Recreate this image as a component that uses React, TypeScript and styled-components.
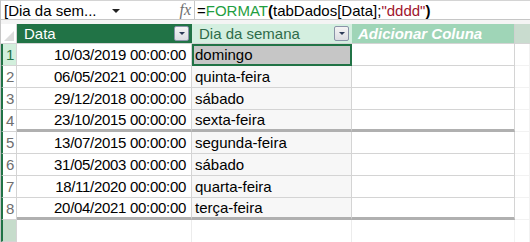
import React from "react";
import styled, { createGlobalStyle } from "styled-components";

const Global = createGlobalStyle`
  html, body {
    margin: 0;
    padding: 0;
    background: #ffffff;
  }
  body {
    font-family: "Liberation Sans", Arial, sans-serif;
  }
`;

const Root = styled.div`
  width: 530px;
  height: 242px;
  overflow: hidden;
  background: #ffffff;
  display: flex;
  flex-direction: column;
  border-left: 1px solid #c6c6c6;
  box-sizing: border-box;
`;

const FormulaBar = styled.div`
  display: flex;
  height: 22px;
  border-top: 1px solid #d4d4d4;
  border-bottom: 1px solid #c6c6c6;
  box-sizing: border-box;
  font-size: 15px;
  color: #000;
`;

const NameBox = styled.div`
  width: 194px;
  display: flex;
  align-items: center;
  padding-left: 3px;
  box-sizing: border-box;
  border-right: 1px solid #c6c6c6;
  white-space: nowrap;
`;

const NameText = styled.span`
  width: 108px;
`;

const DownArrow = styled.span`
  width: 0;
  height: 0;
  border-left: 4px solid transparent;
  border-right: 4px solid transparent;
  border-top: 4px solid #222;
  margin-top: 2px;
`;

const Fx = styled.span`
  margin-left: auto;
  margin-right: 3px;
  font-family: "Liberation Serif", "Times New Roman", serif;
  font-style: italic;
  font-size: 16px;
  color: #6f6f6f;
`;

const Formula = styled.div`
  display: flex;
  align-items: center;
  padding-left: 2px;
  white-space: nowrap;
`;

const Fn = styled.span`
  color: #1f9e3f;
`;

const Paren = styled.span`
  font-weight: bold;
`;

const Str = styled.span`
  color: #a0142e;
`;

const Gap = styled.div`
  height: 5px;
  background: #f4f4f4;
`;

const Grid = styled.div`
  display: grid;
  grid-template-columns: 16px 175px 160px 163px 1fr;
  grid-template-rows: 20px repeat(9, 22px);
  font-size: 15px;
`;

const Corner = styled.div`
  position: relative;
  background: #ffffff;
  border-right: 1px solid #d4d4d4;
  border-bottom: 1px solid #d4d4d4;
  &::after {
    content: "";
    position: absolute;
    right: 2px;
    bottom: 2px;
    width: 0;
    height: 0;
    border-left: 10px solid transparent;
    border-bottom: 10px solid #dcdcdc;
  }
`;

const Header = styled.div<{ $tone: "dark" | "light" | "add" | "rest" }>`
  display: flex;
  align-items: center;
  padding-left: ${(p) => (p.$tone === "add" ? "6px" : "7px")};
  padding-right: 3px;
  box-sizing: border-box;
  white-space: nowrap;
  background: ${(p) =>
    p.$tone === "dark"
      ? "#217346"
      : p.$tone === "light"
      ? "#d4efe0"
      : p.$tone === "add"
      ? "#9fd5b7"
      : "#c9dccf"};
  color: ${(p) => (p.$tone === "dark" || p.$tone === "add" ? "#ffffff" : "#2f6b4a")};
  font-style: ${(p) => (p.$tone === "add" ? "italic" : "normal")};
  font-weight: ${(p) => (p.$tone === "add" ? "bold" : "normal")};
  border-right: ${(p) => (p.$tone === "add" ? "1px solid #d0d0d0" : "none")};
  border-bottom: 1px solid #d4d4d4;
`;

const FilterButton = styled.span`
  margin-left: auto;
  width: 13px;
  height: 13px;
  border: 1px solid #8a93a8;
  border-radius: 2px;
  background: linear-gradient(#f4f4f4, #dcdde2);
  display: flex;
  align-items: center;
  justify-content: center;
  &::after {
    content: "";
    border-left: 3px solid transparent;
    border-right: 3px solid transparent;
    border-top: 3px solid #2b3a57;
  }
`;

const RowHead = styled.div<{ $active?: boolean; $empty?: boolean }>`
  display: flex;
  align-items: center;
  padding-left: 3px;
  box-sizing: border-box;
  background: ${(p) => (p.$active ? "#d2efdc" : p.$empty ? "#c6dccb" : "#ffffff")};
  color: ${(p) => (p.$active ? "#217346" : "#6e6e6e")};
  border-right: 1px solid #d4d4d4;
  border-bottom: 1px solid #d4d4d4;
  border-left: 2px solid #217346;
`;

const Cell = styled.div<{
  $kind: "date" | "day" | "add" | "rest";
  $selected?: boolean;
  $thick?: boolean;
}>`
  display: flex;
  align-items: center;
  box-sizing: border-box;
  white-space: nowrap;
  overflow: hidden;
  justify-content: ${(p) => (p.$kind === "date" ? "flex-end" : "flex-start")};
  padding: ${(p) => (p.$kind === "date" ? "0 5px 0 0" : "0 0 0 3px")};
  letter-spacing: ${(p) => (p.$kind === "date" ? "-0.3px" : "normal")};
  background: ${(p) =>
    p.$selected ? "#c6c6c6" : p.$kind === "day" ? "#f7f7f7" : "#ffffff"};
  border-right: 1px solid
    ${(p) => (p.$kind === "rest" ? "#f2f2f2" : "#d4d4d4")};
  border-bottom: ${(p) =>
    p.$thick
      ? "3px solid #b0b0b0"
      : p.$kind === "rest"
      ? "1px solid #f2f2f2"
      : "1px solid #d4d4d4"};
  outline: ${(p) => (p.$selected ? "2px solid #217346" : "none")};
  outline-offset: -2px;
  color: #000;
`;

const EmptyCell = styled.div<{ $light?: boolean }>`
  border-right: 1px solid ${(p) => (p.$light ? "#f2f2f2" : "#ececec")};
`;

const rows = [
  ["10/03/2019 00:00:00", "domingo"],
  ["06/05/2021 00:00:00", "quinta-feira"],
  ["29/12/2018 00:00:00", "sábado"],
  ["23/10/2015 00:00:00", "sexta-feira"],
  ["13/07/2015 00:00:00", "segunda-feira"],
  ["31/05/2003 00:00:00", "sábado"],
  ["18/11/2020 00:00:00", "quarta-feira"],
  ["20/04/2021 00:00:00", "terça-feira"],
];

const App = () => {
  return (
    <Root>
      <Global />
      <FormulaBar>
        <NameBox>
          <NameText>[Dia da sem...</NameText>
          <DownArrow />
          <Fx>fx</Fx>
        </NameBox>
        <Formula>
          =<Fn>FORMAT</Fn>
          <Paren>(</Paren>tabDados[Data];<Str>"dddd"</Str>
          <Paren>)</Paren>
        </Formula>
      </FormulaBar>
      <Gap />
      <Grid>
        <Corner />
        <Header $tone="dark">
          Data
          <FilterButton />
        </Header>
        <Header $tone="light">
          Dia da semana
          <FilterButton />
        </Header>
        <Header $tone="add">Adicionar Coluna</Header>
        <Header $tone="rest" />
        {rows.map((r, i) => {
          const thick = i === 3 || i === 7;
          return (
            <React.Fragment key={i}>
              <RowHead $active={i === 0}>{i + 1}</RowHead>
              <Cell $kind="date" $thick={thick}>
                {r[0]}
              </Cell>
              <Cell $kind="day" $selected={i === 0} $thick={thick}>
                {r[1]}
              </Cell>
              <Cell $kind="add" $thick={thick} />
              <Cell $kind="rest" />
            </React.Fragment>
          );
        })}
        <RowHead $empty />
        <EmptyCell />
        <EmptyCell />
        <EmptyCell $light />
        <EmptyCell $light />
      </Grid>
    </Root>
  );
};

export default App;
